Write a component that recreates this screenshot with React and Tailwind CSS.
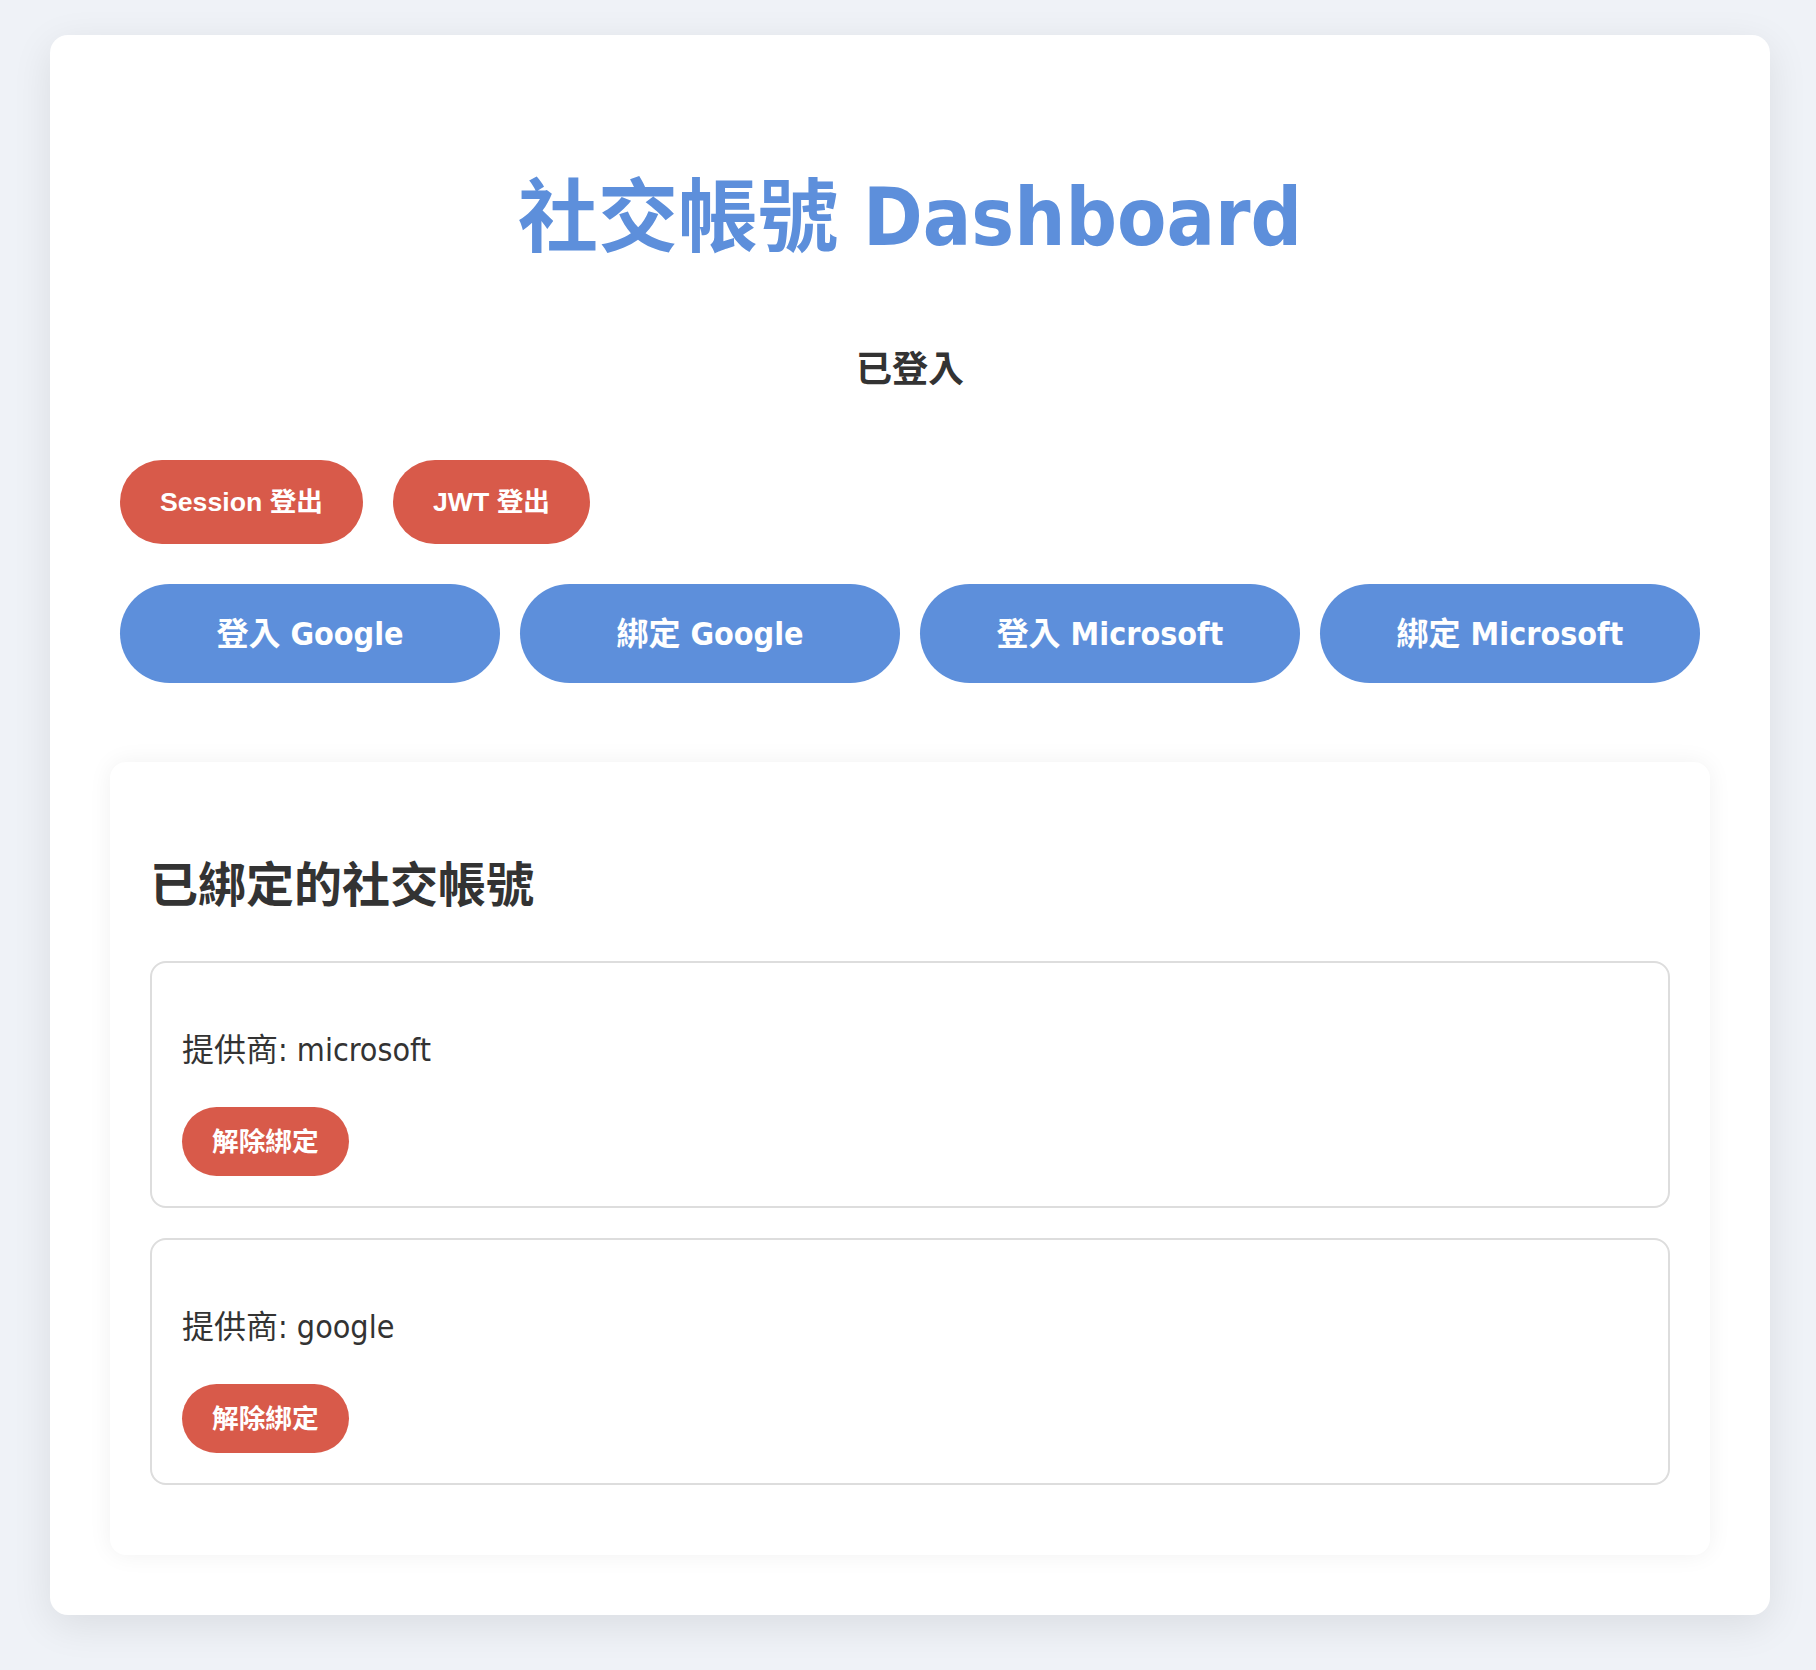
import { useState } from 'react';

const sans = "font-['DejaVu_Sans_Condensed','DejaVu_Sans','Noto_Sans_CJK_TC',sans-serif]";
const btnFont = "font-['Liberation_Sans','Noto_Sans_CJK_TC',sans-serif]";

const bindings = [
  { id: 1, provider: 'microsoft' },
  { id: 2, provider: 'google' },
];

const App = () => {
  const [accounts] = useState(bindings);

  return (
    <div className={`min-h-screen bg-[#eff2f7] pl-[50px] pr-[46px] pt-[35px] pb-[54px] text-[#333] ${sans}`}>
      <div className="rounded-[18px] bg-white px-[60px] pt-[60px] pb-[60px] shadow-[0_10px_40px_rgba(0,0,0,0.09)]">
        {/* Header */}
        <h1 className="mt-[75px] text-center text-[80px] font-bold leading-[96px] text-[#5d8fdb]">
          社交帳號 Dashboard
        </h1>
        <p className="mt-[82px] text-center text-[36px] font-bold leading-[44px]">已登入</p>

        {/* Logout */}
        <div className="mt-[68px] flex gap-[30px] pl-[10px]">
          <button className={`h-[84px] rounded-full bg-[#d85a4a] px-[40px] text-[26.67px] font-bold text-white ${btnFont}`}>
            Session 登出
          </button>
          <button className={`h-[84px] rounded-full bg-[#d85a4a] px-[40px] text-[26.67px] font-bold text-white ${btnFont}`}>
            JWT 登出
          </button>
        </div>

        {/* Login / bind */}
        <div className="mt-[30px] flex">
          {['登入 Google', '綁定 Google', '登入 Microsoft', '綁定 Microsoft'].map((label) => (
            <button
              key={label}
              className="m-[10px] h-[99px] flex-1 rounded-full bg-[#5d8fdb] text-[32px] font-bold text-white"
            >
              {label}
            </button>
          ))}
        </div>

        {/* Bound accounts */}
        <div className="mt-[69px] rounded-[16px] bg-white p-[40px] shadow-[0_0_24px_rgba(0,0,0,0.06)]">
          <h2 className="mt-[54px] mb-[47px] text-[48px] font-bold leading-[58px]">已綁定的社交帳號</h2>
          {accounts.map((acc) => (
            <div key={acc.id} className="mb-[30px] rounded-[16px] border-2 border-[#ddd] px-[30px] pt-[30px] pb-[30px]">
              <p className="mt-[34px] text-[32px] leading-[46px]">提供商: {acc.provider}</p>
              <button
                className={`mt-[34px] h-[69px] rounded-full bg-[#d85a4a] px-[30px] text-[26.67px] font-bold text-white ${btnFont}`}
              >
                解除綁定
              </button>
            </div>
          ))}
        </div>
      </div>
    </div>
  );
};

export default App;
